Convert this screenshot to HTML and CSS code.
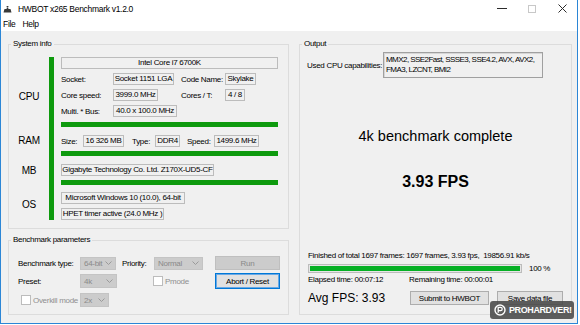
FILE: index.html
```html
<!DOCTYPE html>
<html>
<head>
<meta charset="utf-8">
<title>HWBOT x265 Benchmark v1.2.0</title>
<link rel="stylesheet" href="styles.css">
</head>
<body>
<div class="window">
  <div class="titlebar">
    <svg class="app-icon" width="9" height="7" viewBox="0 0 9 7"><path d="M0.5 6.5 L8.5 6.5 L7.5 3 L5.5 3 L5 1.5 L4 1.5 L3.5 3 L1.5 3 Z" fill="#3a3a3a"/><rect x="3.6" y="0" width="1.8" height="1.2" fill="#3a3a3a"/></svg>
    <span class="title">HWBOT x265 Benchmark v1.2.0</span>
    <div class="controls">
      <span class="ctl"><svg width="10" height="1" viewBox="0 0 10 1"><rect width="10" height="1" fill="#2b2b2b"/></svg></span>
      <span class="ctl"><svg width="8" height="8" viewBox="0 0 8 8"><rect x="0.5" y="0.5" width="7" height="7" fill="none" stroke="#c8c8c8"/></svg></span>
      <span class="ctl"><svg width="9" height="9" viewBox="0 0 9 9"><path d="M0.5 0.5 L8.5 8.5 M8.5 0.5 L0.5 8.5" stroke="#2b2b2b" stroke-width="1"/></svg></span>
    </div>
  </div>
  <div class="menubar"><span class="menu-item">File</span><span class="menu-item">Help</span></div>
  <div class="client">
    <div class="left">
      <fieldset class="group sysinfo">
        <legend>System info</legend>
        <div class="sys">
          <div class="sys-labels">
            <div class="cat cat-cpu">CPU</div>
            <div class="cat cat-ram">RAM</div>
            <div class="cat cat-mb">MB</div>
            <div class="cat cat-os">OS</div>
          </div>
          <div class="vbar"></div>
          <div class="sys-content">
            <div class="box cpu-name">Intel Core i7 6700K</div>
            <div class="cpu-row">
              <span>Socket:</span><span class="box w-socket">Socket 1151 LGA</span>
              <span>Code Name:</span><span class="box w-code">Skylake</span>
            </div>
            <div class="cpu-row">
              <span>Core speed:</span><span class="box w-speed">3999.0 MHz</span>
              <span>Cores / T:</span><span class="box w-cores">4 / 8</span>
            </div>
            <div class="cpu-row">
              <span>Multi. * Bus:</span><span class="box w-multi">40.0 x 100.0 MHz</span>
            </div>
            <div class="hbar bar-cpu"></div>
            <div class="ram-row">
              <span class="l-size">Size:</span><span class="box w-size">16 326 MB</span>
              <span class="l-type">Type:</span><span class="box w-type">DDR4</span>
              <span class="l-rspeed">Speed:</span><span class="box w-rspeed">1499.6 MHz</span>
            </div>
            <div class="hbar bar-ram"></div>
            <div class="box w-mb">Gigabyte Technology Co. Ltd. Z170X-UD5-CF</div>
            <div class="hbar bar-mb"></div>
            <div class="box w-os">Microsoft Windows 10 (10.0), 64-bit</div>
            <div class="box w-timer">HPET timer active (24.0 MHz )</div>
          </div>
        </div>
      </fieldset>
      <fieldset class="group params">
        <legend>Benchmark parameters</legend>
        <div class="params-grid">
          <span>Benchmark type:</span>
          <span class="combo w-c64">64-bit<svg width="7" height="4" viewBox="0 0 7 4"><path d="M0.5 0.5 L3.5 3.5 L6.5 0.5" fill="none" stroke="#9a9a9a"/></svg></span>
          <span>Priority:</span>
          <span class="combo w-cprio">Normal<svg width="7" height="4" viewBox="0 0 7 4"><path d="M0.5 0.5 L3.5 3.5 L6.5 0.5" fill="none" stroke="#9a9a9a"/></svg></span>
          <span class="btn disabled w-run">Run</span>

          <span>Preset:</span>
          <span class="combo w-cpreset">4k<svg width="7" height="4" viewBox="0 0 7 4"><path d="M0.5 0.5 L3.5 3.5 L6.5 0.5" fill="none" stroke="#9a9a9a"/></svg></span>
          <span></span>
          <span class="check pmode"><span class="cb"></span><span class="dim">Pmode</span></span>
          <span class="btn focus w-abort">Abort / Reset</span>

          <span class="check overkill"><span class="cb"></span><span class="dim">Overkill mode</span></span>
          <span class="combo w-c2x">2x<svg width="7" height="4" viewBox="0 0 7 4"><path d="M0.5 0.5 L3.5 3.5 L6.5 0.5" fill="none" stroke="#9a9a9a"/></svg></span>
        </div>
      </fieldset>
    </div>
    <fieldset class="group output">
      <legend>Output</legend>
      <div class="out-body">
        <div class="caps-row">
          <span class="caps-label">Used CPU capabilities:</span>
          <div class="caps-box">MMX2, SSE2Fast, SSSE3, SSE4.2, AVX, AVX2,<br>FMA3, LZCNT, BMI2</div>
        </div>
        <div class="status">4k benchmark complete</div>
        <div class="fps">3.93 FPS</div>
        <div class="finished">Finished of total 1697 frames: 1697 frames, 3.93 fps,&nbsp; 19856.91 kb/s</div>
        <div class="progress-row">
          <div class="progress"><div class="fill" style="width:100%"></div></div>
          <span class="pct">100 %</span>
        </div>
        <div class="times"><span class="elapsed">Elapsed time: 00:07:12</span><span>Remaining time: 00:00:01</span></div>
        <div class="bottom-row">
          <span class="avg">Avg FPS: 3.93</span>
          <span class="btn w-submit">Submit to HWBOT</span>
          <span class="btn w-save">Save data file</span>
        </div>
      </div>
    </fieldset>
  </div>
  <div class="watermark">
    <svg width="12" height="12" viewBox="0 0 12 12"><circle cx="6" cy="6" r="5" fill="none" stroke="#fff" stroke-width="1.4"/><path d="M4.2 8.8 L4.2 3.4 L6.6 3.4 A1.6 1.6 0 0 1 6.6 6.6 L4.8 6.6" fill="none" stroke="#fff" stroke-width="1.3"/></svg>
    <span class="wm-text">PROHARDVER!</span>
  </div>
</div>
</body>
</html>
```

FILE: styles.css
```css
* { box-sizing: border-box; }
html, body { margin: 0; padding: 0; }
body {
  width: 580px;
  height: 325px;
  overflow: hidden;
  background: #ffffff;
  font-family: "Liberation Sans", Arial, sans-serif;
  font-size: 8px;
  letter-spacing: -0.3px;
  color: #000;
}
.window {
  position: relative;
  width: 578px;
  height: 324px;
  border: 1px solid #2b86d6;
  border-top: none;
  background: #fff;
  display: flex;
  flex-direction: column;
}
.titlebar {
  height: 17px;
  display: flex;
  align-items: center;
  padding-left: 2px;
  flex: none;
}
.app-icon { margin-right: 6px; margin-top: 1px; }
.title { font-size: 8.5px; line-height: 12px; padding-top: 1px; }
.controls { margin-left: auto; display: flex; height: 100%; }
.ctl { width: 30px; display: flex; align-items: center; justify-content: center; }
.menubar {
  height: 14px;
  display: flex;
  align-items: center;
  padding-left: 2px;
  gap: 7px;
  font-size: 8.5px;
  flex: none;
}
.client {
  flex: 1;
  background: #f0f0f0;
  display: flex;
  align-items: flex-start;
  padding: 8px 5px 0 7px;
  gap: 10px;
}
.left { width: 281px; flex: none; display: flex; flex-direction: column; }
.group {
  margin: 0;
  padding: 0;
  border: 1px solid #dcdcdc;
  min-width: 0;
}
legend {
  padding: 0 2px;
  margin-left: 2px;
  line-height: 10px;
  font-size: 8px;
}
/* System info */
.group.sysinfo { padding: 8px 10px 8px 0; }
.sys { display: flex; }
.sys-labels {
  width: 40px;
  display: flex;
  flex-direction: column;
  align-items: center;
  font-size: 10px;
  line-height: 12px;
  letter-spacing: -0.2px;
}
.cat-cpu { margin-top: 34px; }
.cat-ram { margin-top: 32px; }
.cat-mb { margin-top: 18px; }
.cat-os { margin-top: 22px; }
.vbar { width: 5px; background: #0e9a0e; margin-right: 7px; }
.sys-content { width: 217px; display: flex; flex-direction: column; }
.box {
  border: 1px solid #bcbcbc;
  height: 12px;
  line-height: 10px;
  padding: 0;
  text-align: center;
  white-space: nowrap;
}
.cpu-name { width: 217px; }
.cpu-row {
  margin-top: 4px;
  height: 12px;
  display: grid;
  grid-template-columns: 52px 68px 44px auto;
  align-items: center;
  white-space: nowrap;
}
.cpu-row > .box { justify-self: start; }
.w-socket { width: 61px; }
.w-code { width: 31px; }
.w-speed { width: 45px; }
.w-cores { width: 20px; }
.w-multi { width: 64px; }
.hbar { height: 5px; background: #0e9a0e; width: 217px; flex: none; }
.bar-cpu { margin-top: 5px; }
.ram-row {
  margin-top: 8px;
  height: 12px;
  display: flex;
  align-items: center;
  white-space: nowrap;
}
.l-size { width: 22px; }
.w-size { width: 41px; }
.l-type { width: 23px; margin-left: 8px; }
.w-type { width: 25px; }
.l-rspeed { width: 27px; margin-left: 7px; }
.w-rspeed { width: 45px; }
.bar-ram { margin-top: 4px; }
.w-mb { width: 153px; margin-top: 8px; }
.bar-mb { margin-top: 4px; }
.w-os { width: 124px; margin-top: 7px; }
.w-timer { width: 103px; margin-top: 4px; }
/* Parameters */
.group.params { margin-top: 6px; padding: 11px 0 6px 0; }
.params-grid {
  display: grid;
  grid-template-columns: 62px 42px 32px 61px 65px;
  grid-template-rows: 14px 16px 16px;
  row-gap: 3px;
  align-items: center;
  white-space: nowrap;
  padding-left: 9px;
}
.combo {
  display: flex;
  align-items: center;
  justify-content: space-between;
  height: 13px;
  border: 1px solid #c4c4c4;
  background: #cccccc;
  color: #8a8a8a;
  padding: 0 3px;
}
.w-c64 { width: 36px; }
.w-cprio { width: 49px; }
.w-cpreset { width: 37px; height: 14px; }
.w-c2x { width: 29px; height: 14px; }
.btn {
  display: flex;
  align-items: center;
  justify-content: center;
  height: 14px;
  border: 1px solid #adadad;
  background: #e1e1e1;
  white-space: nowrap;
}
.btn.disabled { background: #cccccc; border-color: #bfbfbf; color: #8a8a8a; }
.btn.focus { border-color: #0078d7; box-shadow: inset 0 0 0 1px #6aa8e4; height: 16px; }
.w-run { width: 65px; }
.w-abort { width: 65px; }
.check { display: flex; align-items: center; gap: 2px; }
.pmode { margin-left: -1px; }
.overkill { margin-left: 3px; }
.cb { width: 10px; height: 10px; border: 1px solid #bcbcbc; background: #fff; flex: none; }
.dim { color: #8f8f8f; }
/* Output */
.group.output { width: 273px; flex: none; padding: 3px 0 8px 0; }
.out-body { padding-left: 8px; }
.caps-row { display: flex; align-items: center; gap: 4px; margin-left: -1px; }
.caps-label { width: 72px; white-space: nowrap; }
.caps-box {
  width: 160px;
  height: 26px;
  border: 1px solid #a0a0a0;
  box-shadow: inset 1px 1px 0 #d6d6d6;
  padding: 2px 2px;
  line-height: 10px;
  letter-spacing: -0.55px;
  white-space: nowrap;
}
.status {
  margin-top: 49px;
  line-height: 18px;
  font-size: 14.5px;
  letter-spacing: 0;
  text-align: center;
  margin-left: -8px;
}
.fps {
  margin-top: 27px;
  line-height: 20px;
  font-size: 16px;
  font-weight: bold;
  letter-spacing: 0;
  text-align: center;
  margin-left: -8px;
}
.finished { margin-top: 59px; line-height: 10px; white-space: nowrap; }
.progress-row { margin-top: 3px; display: flex; align-items: center; gap: 7px; }
.progress {
  width: 214px;
  height: 9px;
  border: 1px solid #bcbcbc;
  background: #e6e6e6;
  padding: 1px;
}
.fill { height: 100%; background: #06b025; }
.times { margin-top: 2px; line-height: 10px; display: flex; white-space: nowrap; }
.elapsed { width: 101px; }
.bottom-row { margin-top: 5px; height: 16px; display: flex; align-items: center; }
.avg { width: 102px; font-size: 12px; letter-spacing: 0; white-space: nowrap; }
.w-submit { width: 79px; }
.w-save { width: 66px; margin-left: 8px; }
/* Watermark overlay */
.watermark {
  position: absolute;
  left: 489px;
  top: 301px;
  width: 84px;
  height: 18px;
  border-radius: 3px;
  background: rgba(72, 72, 72, 0.88);
  display: flex;
  align-items: center;
  gap: 3px;
  padding-left: 4px;
}
.wm-text {
  color: #fff;
  font-size: 9px;
  font-weight: bold;
  letter-spacing: -0.4px;
  line-height: 12px;
  white-space: nowrap;
}
```
